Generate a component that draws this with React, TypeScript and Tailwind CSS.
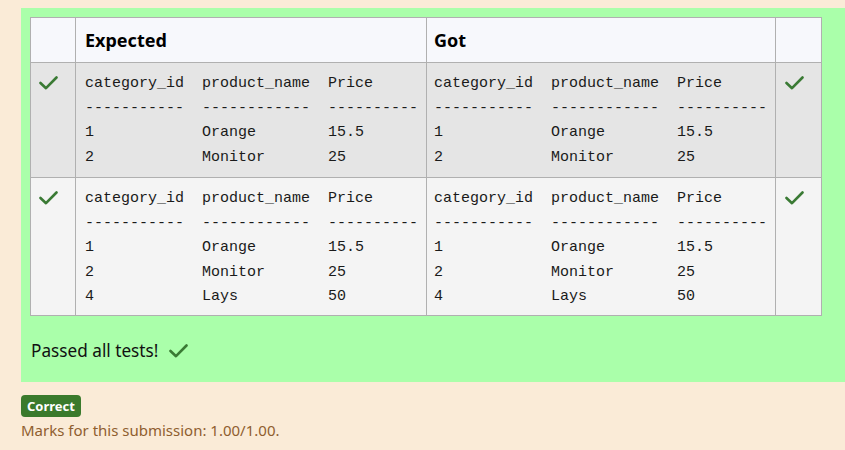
import React from "react";

const expected1 = [
  "category_id  product_name  Price",
  "-----------  ------------  ----------",
  "1            Orange        15.5",
  "2            Monitor       25",
];

const expected2 = [
  "category_id  product_name  Price",
  "-----------  ------------  ----------",
  "1            Orange        15.5",
  "2            Monitor       25",
  "4            Lays          50",
];

const rows = [
  { lines: expected1, bg: "bg-[#e5e5e5]", h: "h-[115px]" },
  { lines: expected2, bg: "bg-[#f4f4f4]", h: "h-[138px]" },
];

function Check({ className = "" }: { className?: string }) {
  return (
    <svg
      width="19"
      height="14"
      viewBox="0 0 19 14"
      fill="none"
      className={className}
    >
      <path
        d="M1.5 7 L7 12.2 L17.5 1.5"
        stroke="#3a7a34"
        strokeWidth="2.6"
        strokeLinecap="round"
        strokeLinejoin="round"
      />
    </svg>
  );
}

function Output({ lines }: { lines: string[] }) {
  return (
    <pre className="m-0 whitespace-pre font-['Liberation_Mono',monospace] text-[15px] leading-[24.6px] text-[#1a1a1a]">
      {lines.join("\n")}
    </pre>
  );
}

export default function App() {
  return (
    <div className="h-[450px] w-[845px] overflow-hidden bg-[#faebd7] pl-[21px] pt-[8px] font-['Noto_Sans',sans-serif]">
      <div className="w-[840px] bg-[#aaffaa] px-[9px] pb-[18px] pt-[9px]">
        <table className="w-[791px] table-fixed border-collapse border border-[#b0b0b0]">
          <colgroup>
            <col className="w-[45px]" />
            <col className="w-[351px]" />
            <col className="w-[349px]" />
            <col className="w-[46px]" />
          </colgroup>
          <thead>
            <tr className="h-[45px] bg-[#f7f8fc]">
              <th className="border border-[#b0b0b0]" />
              <th className="border border-[#b0b0b0] pl-[9px] text-left text-[18px] font-bold text-black">
                Expected
              </th>
              <th className="border border-[#b0b0b0] pl-[7px] text-left text-[18px] font-bold text-black">
                Got
              </th>
              <th className="border border-[#b0b0b0]" />
            </tr>
          </thead>
          <tbody>
            {rows.map((r, i) => (
              <tr key={i} className={`${r.bg} ${r.h}`}>
                <td className="border border-[#b0b0b0] pl-[8px] pt-[13px] align-top">
                  <Check />
                </td>
                <td className="border border-[#b0b0b0] pl-[9px] pt-[9px] align-top">
                  <Output lines={r.lines} />
                </td>
                <td className="border border-[#b0b0b0] pl-[7px] pt-[9px] align-top">
                  <Output lines={r.lines} />
                </td>
                <td className="border border-[#b0b0b0] pl-[9px] pt-[13px] align-top">
                  <Check />
                </td>
              </tr>
            ))}
          </tbody>
        </table>
        <div className="mt-[22px] flex items-center gap-[11px] pl-[1px] text-[17.2px] text-[#111]">
          <span>Passed all tests!</span>
          <Check />
        </div>
      </div>
      <div className="mt-[13px] inline-block rounded-[4px] bg-[#3a7a2c] px-[6px] py-[1px] text-[13px] font-bold leading-[20px] text-white">
        Correct
      </div>
      <div className="mt-[2px] text-[15px] text-[#8f5e2f]">
        Marks for this submission: 1.00/1.00.
      </div>
    </div>
  );
}
